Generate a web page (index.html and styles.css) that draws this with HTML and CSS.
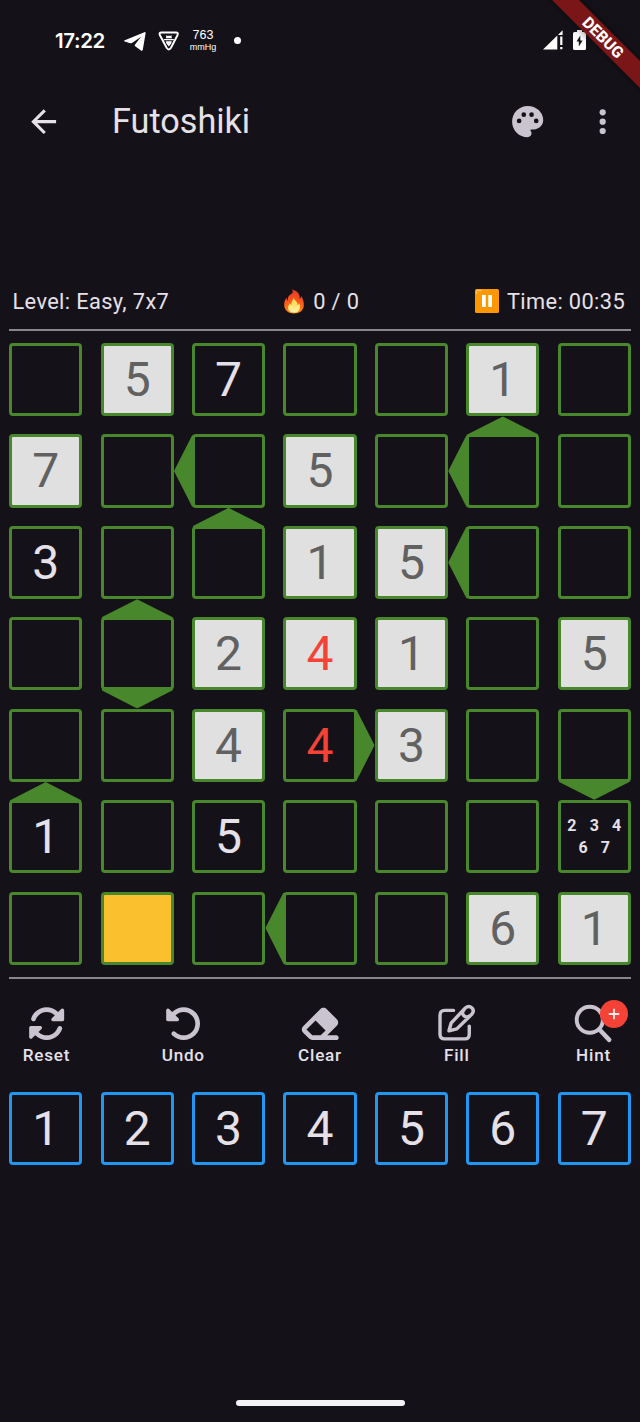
FILE: index.html
```html
<!DOCTYPE html>
<html lang="en">
<head>
<meta charset="utf-8">
<title>Futoshiki</title>
<link rel="stylesheet" href="styles.css">
</head>
<body>
<div class="screen">
  <div class="status">
    <span class="clock">17:22</span>
    <svg class="telegram" width="22" height="19" viewBox="0 0 22 19"><path d="M.8 8.300 20.400.2c.8-.3 1.300.2 1.200 1L18.800 17.800c-.2 1-1 1.200-1.800.7l-5.800-4.300c-.7-.6-.6-1.100-.1-1.700L17 4.700 8 10.900c-.6.400-1.200.5-1.900.3L.8 9.600C-.2 9.200-.1 8.700.8 8.300z" fill="#fff"/></svg>
    <svg class="shield" width="22" height="20" viewBox="0 0 22 20"><path d="M3.500 1.500h14.500q2.600 0 1.600 2.500L13 16.800q-2.200 3.400-4.400 0L1.800 4q-1-2.500 1.700-2.500z" fill="none" stroke="#fff" stroke-width="1.900"/><path d="M8.300 5.500 7.800 4.200 9 4.800h3.800l1.200-.6-.5 1.300.5 1.800H7.800zM5.800 8h10v1.200h-10zM7.800 10.200h6l-.6 2.300-2.400 3-2.400-3z" fill="#fff"/></svg>
    <div class="pressure"><span>763</span><small>mmHg</small></div>
    <i class="dot"></i>
    <svg class="signal" width="21" height="20" viewBox="0 0 21 20"><path d="M0 19.500 14.300 5.500v14zM15 4.900 19.600.3V4.900zM17.200 6.500h2.200v8.500h-2.200zM17.200 17h2.200v2.300h-2.200z" fill="#fff"/></svg>
    <svg class="battery" width="13" height="20" viewBox="0 0 13 20"><path d="M4 0h5v2h2.500Q13 2 13 3.500v15q0 1.500-1.500 1.500h-10Q0 20 0 18.500v-15Q0 2 1.500 2H4z" fill="#fff"/><path d="M7.300 5.500 3.500 11.500H5.800V16.500L9.600 10.500H7.300z" fill="#141218"/></svg>
  </div>
  <div class="appbar">
    <svg class="icon back" viewBox="0 0 24 24"><path d="M20 11H7.830l5.590-5.590L12 4l-8 8 8 8 1.410-1.410L7.830 13H20z"/></svg>
    <h1>Futoshiki</h1>
    <svg class="icon palette" viewBox="0 0 24 24"><path d="M12 2C6.490 2 2 6.490 2 12s4.490 10 10 10c1.380 0 2.500-1.120 2.500-2.500 0-.610-.230-1.200-.640-1.670-.080-.100-.130-.210-.130-.330 0-.280.220-.500.500-.500H16c3.310 0 6-2.690 6-6 0-4.960-4.490-9-10-9z"/><g fill="#141218"><circle cx="6.500" cy="11.500" r="1.500"/><circle cx="9.500" cy="7.500" r="1.500"/><circle cx="14.500" cy="7.500" r="1.500"/><circle cx="17.500" cy="11.500" r="1.500"/></g></svg>
    <svg class="icon more" viewBox="0 0 24 24"><circle cx="12" cy="6" r="2"/><circle cx="12" cy="12" r="2"/><circle cx="12" cy="18" r="2"/></svg>
  </div>
  <div class="info">
    <span class="level">Level: Easy, 7x7</span>
    <span class="streak"><svg width="20" height="25" viewBox="0 0 20 25"><defs><linearGradient id="fl" x1="0" y1="0" x2="0" y2="1"><stop offset="0" stop-color="#e8362b"/><stop offset=".5" stop-color="#f9581d"/><stop offset="1" stop-color="#ff8a0f"/></linearGradient><linearGradient id="in" x1="0" y1="0" x2="0" y2="1"><stop offset="0" stop-color="#ffd13b"/><stop offset="1" stop-color="#fff3a8"/></linearGradient></defs><path d="M8 .5c6 1.500 8.500 5.500 7.500 9.500 1-.5 1.500-2 1.500-3 2 2.500 3 6 2.800 9.500C19.500 21.500 15.500 24.500 10 24.500S.3 21 .2 16c-.1-3 .9-5.500 2.300-7.500 0 1.500.4 2.600 1.300 3.200C3.500 7.500 5.500 6 8 4.500 9 3.600 9 2 8 .5z" fill="url(#fl)"/><path d="M9.800 8.500c0 2.500 4.700 4.500 3.500 7.500 1.200 0 1.500-1.300 1.500-2.200 1 1.500 1.500 3 1.200 5-.4 3-3 5-6.200 5s-5.700-2-5.700-5.200c0-2 1-3.500 2-4.600.3 1 .6 1.600 1.300 2C7 12.500 9 11 9.800 8.500z" fill="url(#in)"/></svg>0 / 0</span>
    <span class="time"><svg width="24" height="24" viewBox="0 0 24 24"><rect width="24" height="24" rx="1.500" fill="#ff9800"/><path d="M1.500 4V2.500q0-1 1-1H6" stroke="#ffbd52" stroke-width="1.500" fill="none" stroke-linecap="round"/><path d="M7 6h3.700v12H7zM13.300 6H17v12h-3.700z" fill="#fff"/></svg>Time: 00:35</span>
  </div>
  <div class="board">
    <div class="cell"></div><div class="cell given">5</div><div class="cell">7</div><div class="cell"></div><div class="cell"></div><div class="cell given">1</div><div class="cell"></div>
    <div class="cell given">7</div><div class="cell"></div><div class="cell left"></div><div class="cell given">5</div><div class="cell"></div><div class="cell left up"></div><div class="cell"></div>
    <div class="cell">3</div><div class="cell"></div><div class="cell up"></div><div class="cell given">1</div><div class="cell given">5</div><div class="cell left"></div><div class="cell"></div>
    <div class="cell"></div><div class="cell up down"></div><div class="cell given">2</div><div class="cell given wrong">4</div><div class="cell given">1</div><div class="cell"></div><div class="cell given">5</div>
    <div class="cell"></div><div class="cell"></div><div class="cell given">4</div><div class="cell wrong right">4</div><div class="cell given">3</div><div class="cell"></div><div class="cell down"></div>
    <div class="cell up">1</div><div class="cell"></div><div class="cell">5</div><div class="cell"></div><div class="cell"></div><div class="cell"></div><div class="cell notes"><span>2</span><span>3</span><span>4</span><span>6</span><span>7</span></div>
    <div class="cell"></div><div class="cell selected"></div><div class="cell"></div><div class="cell left"></div><div class="cell"></div><div class="cell given">6</div><div class="cell given">1</div>
  </div>
  <div class="tools">
    <div class="tool"><svg class="icon" viewBox="0 0 512 512"><path d="M142.900 142.900c-17.500 17.500-30.100 38-37.800 59.800c-5.900 16.700-24.200 25.400-40.800 19.500s-25.400-24.200-19.500-40.800C55.600 150.700 73.200 122 97.600 97.600c87.200-87.200 228.300-87.500 315.800-1L455 55c6.900-6.900 17.200-8.900 26.200-5.200s14.800 12.500 14.800 22.200l0 128c0 13.300-10.700 24-24 24L344 224c-9.700 0-18.500-5.800-22.200-14.800s-1.700-19.300 5.200-26.200l41.100-41.100c-62.600-61.500-163.100-61.200-225.300 1zM16 312c0-13.300 10.700-24 24-24L168 288c9.700 0 18.500 5.800 22.200 14.800s1.700 19.300-5.200 26.200l-41.100 41.100c62.600 61.500 163.100 61.200 225.300-1c17.500-17.500 30.100-38 37.800-59.800c5.900-16.700 24.200-25.400 40.800-19.500s25.400 24.200 19.500 40.800c-10.800 30.600-28.400 59.300-52.900 83.800c-87.200 87.200-228.300 87.500-315.800 1L57 457c-6.900 6.900-17.200 8.900-26.200 5.200S16 449.700 16 440z"/></svg><span>Reset</span></div>
    <div class="tool"><svg class="icon" viewBox="0 0 512 512"><path d="M48.500 224H40c-13.300 0-24-10.700-24-24V72c0-9.700 5.800-18.500 14.800-22.200s19.300-1.700 26.200 5.200L98.600 96.600c87.600-86.500 228.700-86.200 315.800 1c87.500 87.500 87.500 229.300 0 316.800s-229.300 87.500-316.800 0c-12.500-12.500-12.500-32.800 0-45.300s32.800-12.500 45.300 0c62.500 62.500 163.800 62.500 226.300 0s62.500-163.800 0-226.300c-62.200-62.200-162.700-62.500-225.300-1L185 183c6.900 6.900 8.900 17.200 5.200 26.200s-12.500 14.800-22.200 14.800H48.500z"/></svg><span>Undo</span></div>
    <div class="tool"><svg class="icon wide" viewBox="0 0 576 512"><path d="M290.700 57.400L57.400 290.700c-25 25-25 65.500 0 90.500l80 80c12 12 28.300 18.700 45.300 18.700H512c17.700 0 32-14.300 32-32s-14.300-32-32-32H387.900L518.600 285.300c25-25 25-65.500 0-90.500L381.300 57.400c-25-25-65.500-25-90.500 0zM297.400 416H182.600l-80-80L227.300 211.300 364.700 348.700 297.400 416z"/></svg><span>Clear</span></div>
    <div class="tool"><svg class="icon line" viewBox="0 0 38 38"><path d="M15.500 5.500H6.500Q1.700 5.500 1.700 10.500V29.500Q1.700 34.500 6.500 34.500H27Q31.500 34.500 31.500 29.500V21.500M13 18.500 27.500 3Q31 0 34.200 3Q37 6 34 9.500L18.800 24.300 10.800 26.300ZM26 5A4.200 4.200 0 0 0 32 11" fill="none" stroke="#cac4d0" stroke-width="3.500" stroke-linecap="round" stroke-linejoin="round"/></svg><span>Fill</span></div>
    <div class="tool"><svg class="icon line" viewBox="0 0 38 38"><circle cx="14.700" cy="15" r="13.300" fill="none" stroke="#cac4d0" stroke-width="4"/><path d="M24.500 25 34.500 35.500" stroke="#cac4d0" stroke-width="4.600" stroke-linecap="round"/></svg><span>Hint</span><b class="badge"><svg width="12" height="12" viewBox="0 0 12 12"><path d="M6 .7v10.600M.7 6h10.600" stroke="#fbe9ec" stroke-width="1.800"/></svg></b></div>
  </div>
  <div class="keys">
    <div class="cell">1</div><div class="cell">2</div><div class="cell">3</div><div class="cell">4</div><div class="cell">5</div><div class="cell">6</div><div class="cell">7</div>
  </div>
  <div class="home"></div>
  <div class="ribbon">DEBUG</div>
</div>
</body>
</html>
```
FILE: styles.css
```css
* { box-sizing: border-box; }
body { margin: 0; background: #141218; }
.screen {
  position: relative;
  width: 640px;
  height: 1422px;
  overflow: hidden;
  display: flex;
  flex-direction: column;
  color: #e6e0e9;
  background: #141218;
  font-family: Roboto, sans-serif;
}
svg { display: block; flex: none; }
.icon { width: 37.33px; height: 37.33px; fill: #cac4d0; }

.status {
  height: 78px;
  padding: 2px 54px 0 55px;
  display: flex;
  align-items: center;
  color: #fff;
}
.clock { width: 69px; font: 600 20.5px Inter, sans-serif; letter-spacing: -0.4px; white-space: nowrap; }
.telegram { margin-top: 2px; }
.shield { margin-left: 12px; margin-top: 2px; }
.pressure {
  width: 26px;
  margin-left: 10px;
  display: flex;
  flex-direction: column;
  align-items: center;
  font: 12.5px/13px "Liberation Sans", Arial, sans-serif;
}
.pressure small { font-size: 9px; line-height: 10px; }
.dot { width: 7px; height: 7px; margin-left: 18px; border-radius: 50%; background: #fff; }
.signal { margin-left: auto; }
.battery { margin-left: 9px; }

.appbar {
  height: 87px;
  padding: 0 18.500px 0 25px;
  display: flex;
  align-items: center;
}
.back { fill: #e6e0e9; }
.appbar h1 { margin: -2px 0 0 49.700px; font-size: 34.200px; font-weight: 400; }
.palette { margin-left: auto; }
.more { margin-left: 38px; }

.info {
  height: 58.500px;
  margin: 107px 9px 0 9px;
  padding: 2px 6px 0 3.500px;
  display: grid;
  grid-template-columns: 1fr auto 1fr;
  align-items: center;
  border-bottom: 2px solid #89868c;
  font-size: 21.800px;
  letter-spacing: 0.37px;
  white-space: nowrap;
}
.streak, .time { display: flex; align-items: center; gap: 9px; }
.streak { padding-left: 6px; }
.time { justify-self: end; gap: 8px; }

.board, .keys {
  display: grid;
  grid-template-columns: repeat(7, 73.143px);
  grid-auto-rows: 73.143px;
  gap: 18.286px;
  padding: 0 9.143px;
}
.board { margin-top: 12.500px; }
.cell {
  position: relative;
  display: flex;
  align-items: center;
  justify-content: center;
  padding-top: 1px;
  border: 3px solid #48872b;
  border-radius: 4px;
  font-size: 48px;
  line-height: 56px;
}
.given { background: #e0e0e0; color: #616161; }
.wrong { color: #f44336; }
.selected { background: #fbc02d; }
.up::before, .down::after, .left::after, .right::after {
  content: "";
  position: absolute;
  background: #48872b;
}
.up::before { left: -2px; right: -2px; bottom: 100%; height: 21px; clip-path: polygon(50% 0, 100% 86%, 100% 100%, 0 100%, 0 86%); }
.down::after { left: -2px; right: -2px; top: 100%; height: 21px; clip-path: polygon(50% 100%, 100% 14%, 100% 0, 0 0, 0 14%); }
.left::after { top: -2px; bottom: -2px; right: 100%; width: 21px; clip-path: polygon(0 50%, 86% 100%, 100% 100%, 100% 0, 86% 0); }
.right::after { top: -2px; bottom: -2px; left: 100%; width: 21px; clip-path: polygon(100% 50%, 14% 100%, 0 100%, 0 0, 14% 0); }
.notes {
  flex-wrap: wrap;
  align-content: center;
  font-size: 16px;
  font-weight: 700;
  line-height: 22.500px;
}
.notes span { width: 22.300px; text-align: center; }

.tools {
  height: 115px;
  margin: 12.500px 9px 0;
  padding: 26px 1px 0;
  display: flex;
  justify-content: space-between;
  border-top: 2px solid #89868c;
}
.tool {
  position: relative;
  width: 73px;
  display: flex;
  flex-direction: column;
  align-items: center;
  font-size: 17.100px;
  font-weight: 500;
  line-height: 24px;
  letter-spacing: 0.78px;
}
.tool .wide { width: 42px; }
.tool .line { width: 38px; height: 37.33px; overflow: visible; }
.badge {
  position: absolute;
  left: 42.500px;
  top: -5px;
  width: 28px;
  height: 28px;
  display: grid;
  place-items: center;
  border-radius: 50%;
  background: #f44336;
}
.keys .cell { border-color: #2196f3; }

.home { width: 169px; height: 6px; margin: auto auto 16px; border-radius: 3px; background: #f4f2f5; }

.ribbon {
  position: absolute;
  left: 503px;
  top: 27.700px;
  width: 200px;
  height: 19px;
  transform: rotate(45deg);
  background: #7a1518;
  box-shadow: 0 0 9px rgba(0, 0, 0, 0.5);
  color: #fff;
  text-align: center;
  font-size: 15.900px;
  font-weight: 800;
  line-height: 19px;
}
```
